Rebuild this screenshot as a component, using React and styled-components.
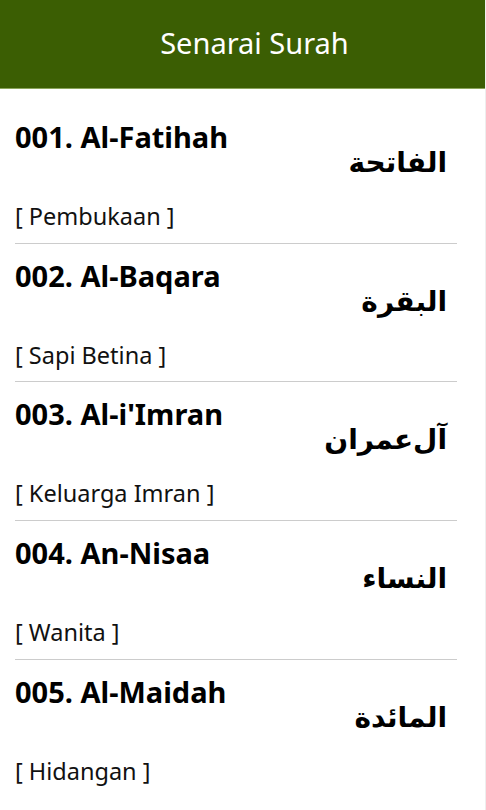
import React from "react";
import styled, { createGlobalStyle } from "styled-components";

const GlobalStyle = createGlobalStyle`
  html, body {
    margin: 0;
    padding: 0;
    background: #fff;
  }
  body {
    font-family: "Noto Sans", "Open Sans", sans-serif;
  }
`;

const surahs = [
  { no: "001", name: "Al-Fatihah", arabic: "الفاتحة", meaning: "Pembukaan" },
  { no: "002", name: "Al-Baqara", arabic: "البقرة", meaning: "Sapi Betina" },
  { no: "003", name: "Al-i'Imran", arabic: "آل‌عمران", meaning: "Keluarga Imran" },
  { no: "004", name: "An-Nisaa", arabic: "النساء", meaning: "Wanita" },
  { no: "005", name: "Al-Maidah", arabic: "المائدة", meaning: "Hidangan" },
];

export default function App() {
  return (
    <Page>
      <GlobalStyle />
      <Header>
        <Title>Senarai Surah</Title>
      </Header>
      <List>
        {surahs.map((s) => (
          <Row key={s.no}>
            <Name>
              {s.no}. {s.name}
            </Name>
            <Arabic lang="ar" dir="rtl">
              {s.arabic}
            </Arabic>
            <Meaning>[ {s.meaning} ]</Meaning>
          </Row>
        ))}
      </List>
    </Page>
  );
}

const Page = styled.div`
  width: 486px;
  height: 810px;
  overflow: hidden;
  box-sizing: border-box;
  border-right: 1px solid #eeeeee;
  background: #fff;
`;

const Header = styled.header`
  height: 88px;
  padding-left: 24px;
  background: #3b5e03;
  border-bottom: 1px solid #8aa45a;
  display: flex;
  align-items: center;
  justify-content: center;
`;

const Title = styled.h1`
  margin: 0;
  color: #fff;
  font-family: "Noto Sans", sans-serif;
  font-weight: 400;
  font-size: 29px;
  line-height: 40px;
  padding-bottom: 2px;
`;

const List = styled.ul`
  list-style: none;
  margin: 0;
  padding: 16px 28px 0 15px;
`;

const Row = styled.li`
  display: flex;
  flex-direction: column;
  padding: 14px 0 11.67px;
  border-bottom: 1px solid #cccccc;

  &:last-child {
    border-bottom: none;
  }
`;

const Name = styled.div`
  font-family: "Noto Sans", sans-serif;
  font-weight: 700;
  font-size: 29px;
  line-height: 36px;
  color: #000;
`;

const Arabic = styled.div`
  align-self: flex-end;
  margin-top: -12px;
  padding-right: 10px;
  font-family: "DejaVu Sans", sans-serif;
  font-weight: 700;
  font-size: 28px;
  line-height: 40px;
  color: #000;
`;

const Meaning = styled.div`
  margin-top: 18px;
  font-family: "Noto Sans", sans-serif;
  font-size: 23.5px;
  line-height: 30px;
  color: #111;
`;
